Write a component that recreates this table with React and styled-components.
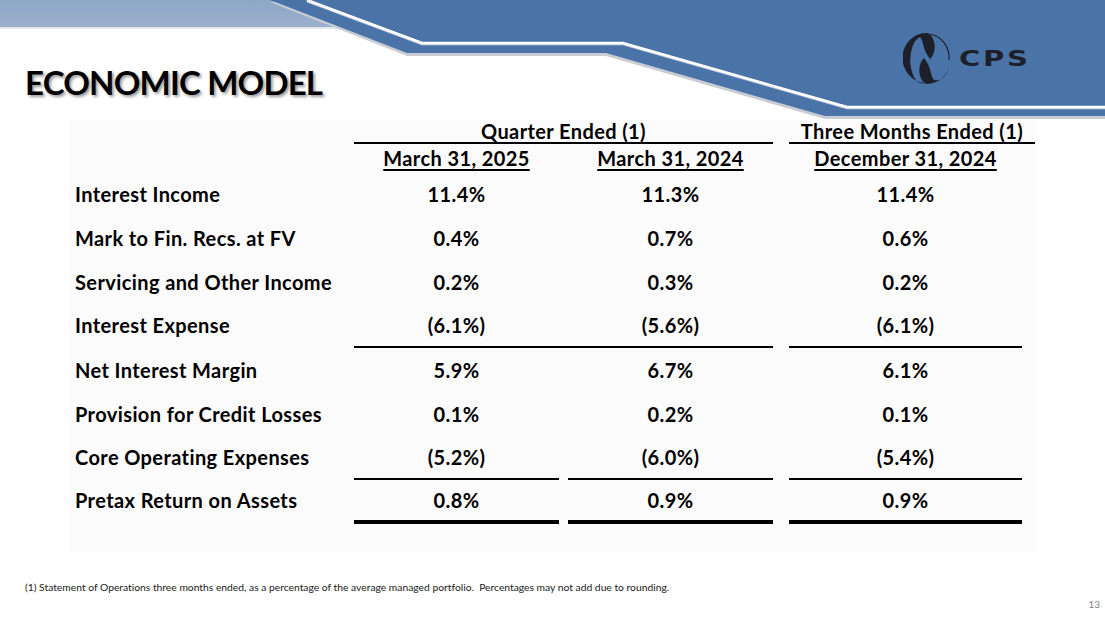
import React from 'react';
import styled, { createGlobalStyle, css } from 'styled-components';

const GlobalStyle = createGlobalStyle`
    html, body {
        margin: 0;
        padding: 0;
        background: #ffffff;
    }
`;

const COLS = '279px 205px 9px 205px 16px 233px 13px';

const Page = styled.div`
    width: 1105px;
    height: 624px;
    overflow: hidden;
    display: flex;
    flex-direction: column;
    background: #ffffff;
    font-family: Lato, 'Open Sans', sans-serif;
    font-variant-ligatures: none;
    color: #000;
`;

/* header art and title share one grid cell */
const Header = styled.header`
    display: grid;
    height: 120px;

    & > * {
        grid-area: 1 / 1;
    }
`;

const HeaderArt = styled.svg`
    display: block;
`;

const HeaderContent = styled.div`
    display: flex;
    justify-content: space-between;
    align-items: flex-start;
    padding: 0 94px 0 25px;
`;

const Title = styled.h1`
    margin: 66px 0 0;
    font-size: 33px;
    line-height: 1;
    font-weight: 700;
    letter-spacing: -0.8px;
    color: #000;
    text-shadow: 2px 2px 3px rgba(0, 0, 0, 0.4);
`;

const Logo = styled.div`
    display: flex;
    align-items: center;
    gap: 8px;
    margin-top: 32px;
`;

const LogoText = styled.span`
    display: block;
    width: 52px;
    margin-top: 2px;
    font-family: 'DejaVu Sans', sans-serif;
    font-weight: 700;
    font-size: 21px;
    letter-spacing: 2px;
    color: #1d1f2b;
    transform: scaleX(1.38);
    transform-origin: left center;
`;

const Panel = styled.section`
    margin-left: 70px;
    width: 965px;
    height: 432px;
    padding-left: 5px;
    box-sizing: border-box;
    background: #fbfbfb;
`;

const Row = styled.div`
    display: grid;
    grid-template-columns: ${COLS};
    height: ${props => props.$height || 44}px;
    font-size: 20px;
    font-weight: 700;
    letter-spacing: 0.4px;
`;

const GroupHead = styled.div`
    grid-column: ${props => props.$span};
    border-bottom: 2px solid #000;
    text-align: center;
    line-height: 22px;
`;

const DateHead = styled.div`
    grid-column: ${props => props.$col};
    text-align: center;
    line-height: 28px;
    text-decoration: underline;
    text-decoration-thickness: 1.5px;
    text-underline-offset: 3px;
`;

const Cell = styled.div`
    display: flex;
    align-items: center;
    box-sizing: border-box;
    justify-content: ${props => (props.$label ? 'flex-start' : 'center')};
    border-bottom: ${props => props.$rule}px solid transparent;

    ${props =>
        props.$ruled &&
        css`
            border-bottom-color: #000;
        `}
`;

const Footer = styled.footer`
    display: flex;
    flex-direction: column;
`;

const FootNote = styled.p`
    margin: 29px 0 0 25px;
    font-size: 10.3px;
    line-height: 12px;
    white-space: pre;
    color: #1a1a1a;
`;

const PageNum = styled.span`
    align-self: flex-end;
    margin: 5px 5px 0 0;
    font-size: 10px;
    line-height: 12px;
    color: #7f7f7f;
`;

const rows = [
    { label: 'Interest Income', v: ['11.4%', '11.3%', '11.4%'] },
    { label: 'Mark to Fin. Recs. at FV', v: ['0.4%', '0.7%', '0.6%'] },
    { label: 'Servicing and Other Income', v: ['0.2%', '0.3%', '0.2%'] },
    { label: 'Interest Expense', v: ['(6.1%)', '(5.6%)', '(6.1%)'], rule: 'join' },
    { label: 'Net Interest Margin', v: ['5.9%', '6.7%', '6.1%'] },
    { label: 'Provision for Credit Losses', v: ['0.1%', '0.2%', '0.1%'] },
    { label: 'Core Operating Expenses', v: ['(5.2%)', '(6.0%)', '(5.4%)'], rule: 'split' },
    { label: 'Pretax Return on Assets', v: ['0.8%', '0.9%', '0.9%'], rule: 'double' },
];

// two interlocking commas: one wraps the left side, the other the bottom right
const CpsMark = () => (
    <svg width="48" height="52" viewBox="0 0 48 52">
        <g fill="#1d1f2b">
            <path d="M25 1 A24 25 0 0 0 22 51 A12 23 0 0 1 17 5 C21 9 19 17 27 27 C34 20 33 6 25 1 Z" />
            <path
                d="M25 1 A24 25 0 0 0 2 17 A14 20 0 0 1 17 5 C21 9 19 17 27 27 C34 20 33 6 25 1 Z"
                transform="rotate(180 24 26.5)"
            />
        </g>
        <path d="M27 2 A23 24 0 0 1 46 28" stroke="#1d1f2b" strokeWidth="1.2" fill="none" />
    </svg>
);

const Banner = () => (
    <HeaderArt width="1105" height="120" viewBox="0 0 1105 120">
        <defs>
            <linearGradient id="band" x1="0" y1="0" x2="0" y2="1">
                <stop offset="0" stopColor="#8ea7c7" />
                <stop offset="1" stopColor="#9ab0cd" />
            </linearGradient>
        </defs>
        <rect x="0" y="0" width="360" height="27" fill="url(#band)" />
        <rect x="0" y="27" width="360" height="2" fill="#e3e7ec" />
        <polygon
            points="270,2 1105,2 1105,119 825,119 606,56 407,56"
            fill="#c9cdd3"
        />
        <polygon
            points="270,0 1105,0 1105,116 825,116 606,53 407,53"
            fill="#4a73a8"
        />
        <polyline
            points="307,1 422,44 623,44 847,108 1105,108"
            fill="none"
            stroke="#c8d2de"
            strokeWidth="2.5"
        />
        <polyline
            points="307,0 422,43 623,43 847,107 1105,107"
            fill="none"
            stroke="#ffffff"
            strokeWidth="2.5"
        />
    </HeaderArt>
);

const ruleWidth = { join: 2, split: 2, double: 4 };

const App = () => {
    return (
        <Page>
            <GlobalStyle />
            <Header>
                <Banner />
                <HeaderContent>
                    <Title>ECONOMIC MODEL</Title>
                    <Logo>
                        <CpsMark />
                        <LogoText>CPS</LogoText>
                    </Logo>
                </HeaderContent>
            </Header>

            <Panel>
                <Row $height={24}>
                    <GroupHead $span="2 / 5">Quarter Ended (1)</GroupHead>
                    <GroupHead $span="6 / 8">Three Months Ended (1)</GroupHead>
                </Row>
                <Row $height={28}>
                    <DateHead $col="2">March 31, 2025</DateHead>
                    <DateHead $col="4">March 31, 2024</DateHead>
                    <DateHead $col="6">December 31, 2024</DateHead>
                </Row>
                {rows.map(row => {
                    const w = ruleWidth[row.rule] || 0;
                    const on = !!row.rule;
                    return (
                        <Row key={row.label}>
                            <Cell $label $rule={w}>
                                {row.label}
                            </Cell>
                            <Cell $rule={w} $ruled={on}>
                                {row.v[0]}
                            </Cell>
                            <Cell $rule={w} $ruled={row.rule === 'join'} />
                            <Cell $rule={w} $ruled={on}>
                                {row.v[1]}
                            </Cell>
                            <Cell $rule={w} />
                            <Cell $rule={w} $ruled={on}>
                                {row.v[2]}
                            </Cell>
                        </Row>
                    );
                })}
            </Panel>

            <Footer>
                <FootNote>
                    (1) Statement of Operations three months ended, as a percentage of the average managed portfolio.  Percentages may not add due to rounding.
                </FootNote>
                <PageNum>13</PageNum>
            </Footer>
        </Page>
    );
};

export default App;
